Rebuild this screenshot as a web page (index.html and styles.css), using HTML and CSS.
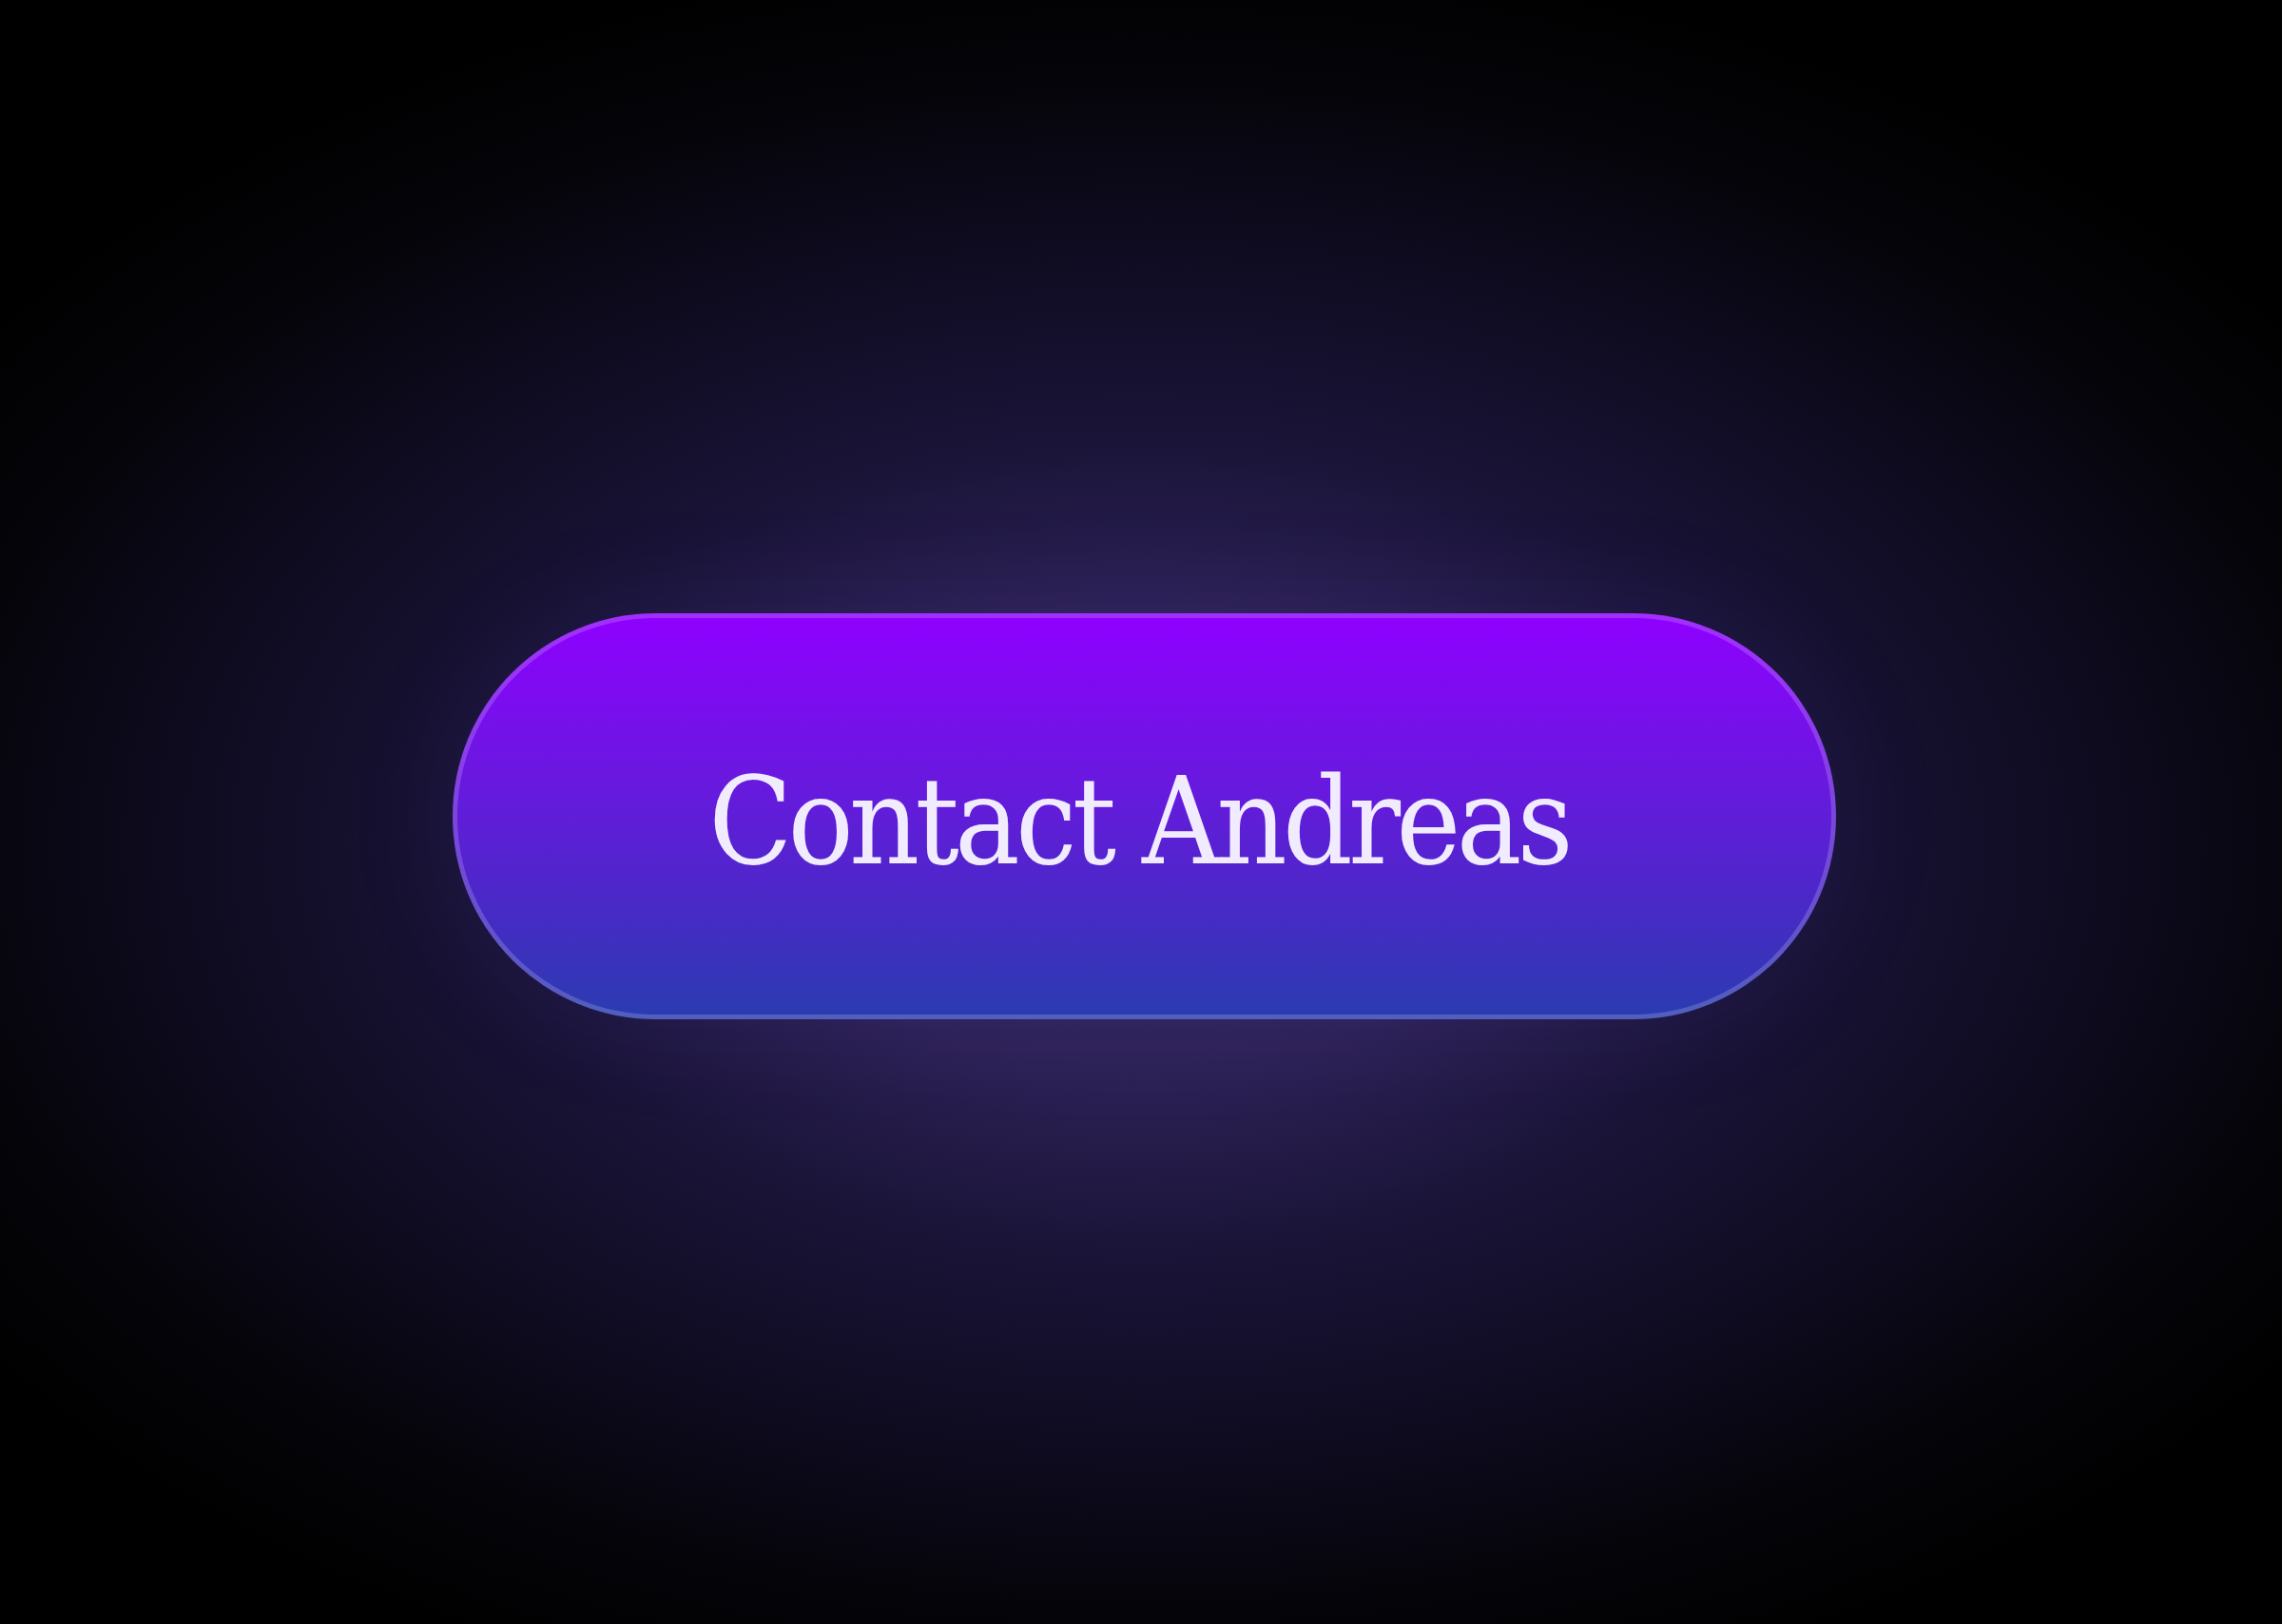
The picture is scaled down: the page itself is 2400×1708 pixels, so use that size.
FILE: index.html
```html
<!DOCTYPE html>
<html lang="en">
<head>
  <meta charset="UTF-8">
  <meta name="viewport" content="width=device-width, initial-scale=1.0">
  <title>Contact</title>
  <link rel="stylesheet" href="styles.css">
</head>
<body>
  <main class="stage">
    <!-- Call to action -->
    <a href="#contact" class="contact-button">Contact Andreas</a>
  </main>
</body>
</html>
```

FILE: styles.css
```css
/* Page */
html, body {
  margin: 0;
  padding: 0;
  height: 100%;
}

body {
  background-color: #000000;
  background-image: radial-gradient(ellipse 1500px 950px at 50% 52%,
    #372a62 0%,
    #2d2256 25%,
    #1a1438 45%,
    #0e0b1f 68%,
    #050409 85%,
    #000000 100%);
  font-family: 'DejaVu Serif Condensed', 'DejaVu Serif', serif;
}

.stage {
  min-height: 100vh;
  display: flex;
  align-items: center;
  justify-content: center;
  padding-top: 9px;
  padding-left: 7px;
  box-sizing: border-box;
}

/* Pill button */
.contact-button {
  display: flex;
  align-items: center;
  justify-content: center;
  box-sizing: border-box;
  width: 1455px;
  height: 427px;
  border: 5px solid rgba(255, 255, 255, 0.18);
  border-radius: 999px;
  background-image: linear-gradient(180deg, #8f00ff 0%, #6a18e0 40%, #4b28c8 70%, #2a3cb0 100%);
  background-origin: border-box;
  color: #f1ebff;
  font-size: 128px;
  font-stretch: condensed;
  letter-spacing: -0.037em;
  text-decoration: none;
  line-height: 1;
  padding-top: 10px;
  padding-right: 12px;
  box-shadow: 0 0 120px rgba(90, 60, 200, 0.12);
}
```
